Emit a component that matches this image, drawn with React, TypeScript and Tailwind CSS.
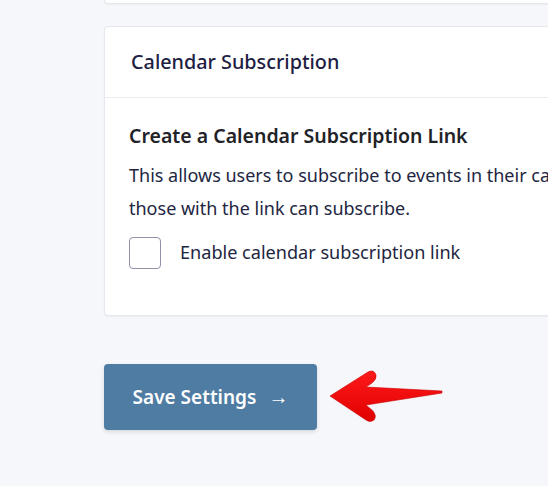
export default function App() {
  return (
    <div className="min-h-[486px] w-[548px] overflow-hidden bg-[#f6f7fb] pl-[104px] font-['Noto_Sans',sans-serif]">
      {/* previous card, only its bottom edge is visible */}
      <div className="h-[4px] w-[620px] rounded-b-[4px] border border-t-0 border-[#e6e8ef] bg-white shadow-[0_1px_2px_rgba(0,0,0,0.04)]" />

      {/* Calendar Subscription card */}
      <div className="mt-[22px] w-[620px] rounded-[4px] border border-[#e6e8ef] bg-white shadow-[0_1px_2px_rgba(0,0,0,0.05)]">
        <div className="flex h-[71px] items-center border-b border-[#e9ebf0] pl-[26px]">
          <h2 className="text-[19.8px] font-medium text-[#1d2042]">Calendar Subscription</h2>
        </div>
        <div className="pb-[46px] pl-[24px] pt-[25px]">
          <h3 className="text-[19.5px] font-semibold leading-[26px] text-[#1f2328]">
            Create a Calendar Subscription Link
          </h3>
          <p className="mt-[10px] whitespace-nowrap text-[18px] leading-[33px] text-[#22263f]">
            This allows users to subscribe to events in their calendar app. Only
            <br />
            those with the link can subscribe.
          </p>
          <label className="mt-[12px] flex items-center gap-[19px]">
            <span className="h-[32px] w-[32px] rounded-[4px] border border-[#8f91aa] bg-white" />
            <span className="text-[18.1px] text-[#22263f]">Enable calendar subscription link</span>
          </label>
        </div>
      </div>

      <div className="mt-[48px] flex items-center gap-[10px]">
        <button className="flex h-[66px] w-[213px] items-center justify-center rounded-[4px] bg-[#4f7ca3] text-[19px] font-semibold text-white shadow-[0_2px_4px_rgba(0,0,0,0.12)]">
          Save Settings <span className="ml-[12px] text-[20px] font-medium">→</span>
        </button>
        <svg width="120" height="58" viewBox="0 0 120 58" className="mt-[-2px]">
          <defs>
            <linearGradient id="red" x1="0" y1="0" x2="0" y2="1">
              <stop offset="0" stopColor="#ff1a1a" />
              <stop offset="1" stopColor="#e00000" />
            </linearGradient>
          </defs>
          <path
            d="M3 29 L41 5 Q47 2 49 8 Q50 12 45 16 L39 20 L115 24 L115 26 L39 38 L46 44 Q50 49 47 53 Q43 56 39 53 Z"
            fill="url(#red)"
            stroke="#c80000"
            strokeWidth="0.6"
            strokeLinejoin="round"
          />
        </svg>
      </div>
    </div>
  )
}
